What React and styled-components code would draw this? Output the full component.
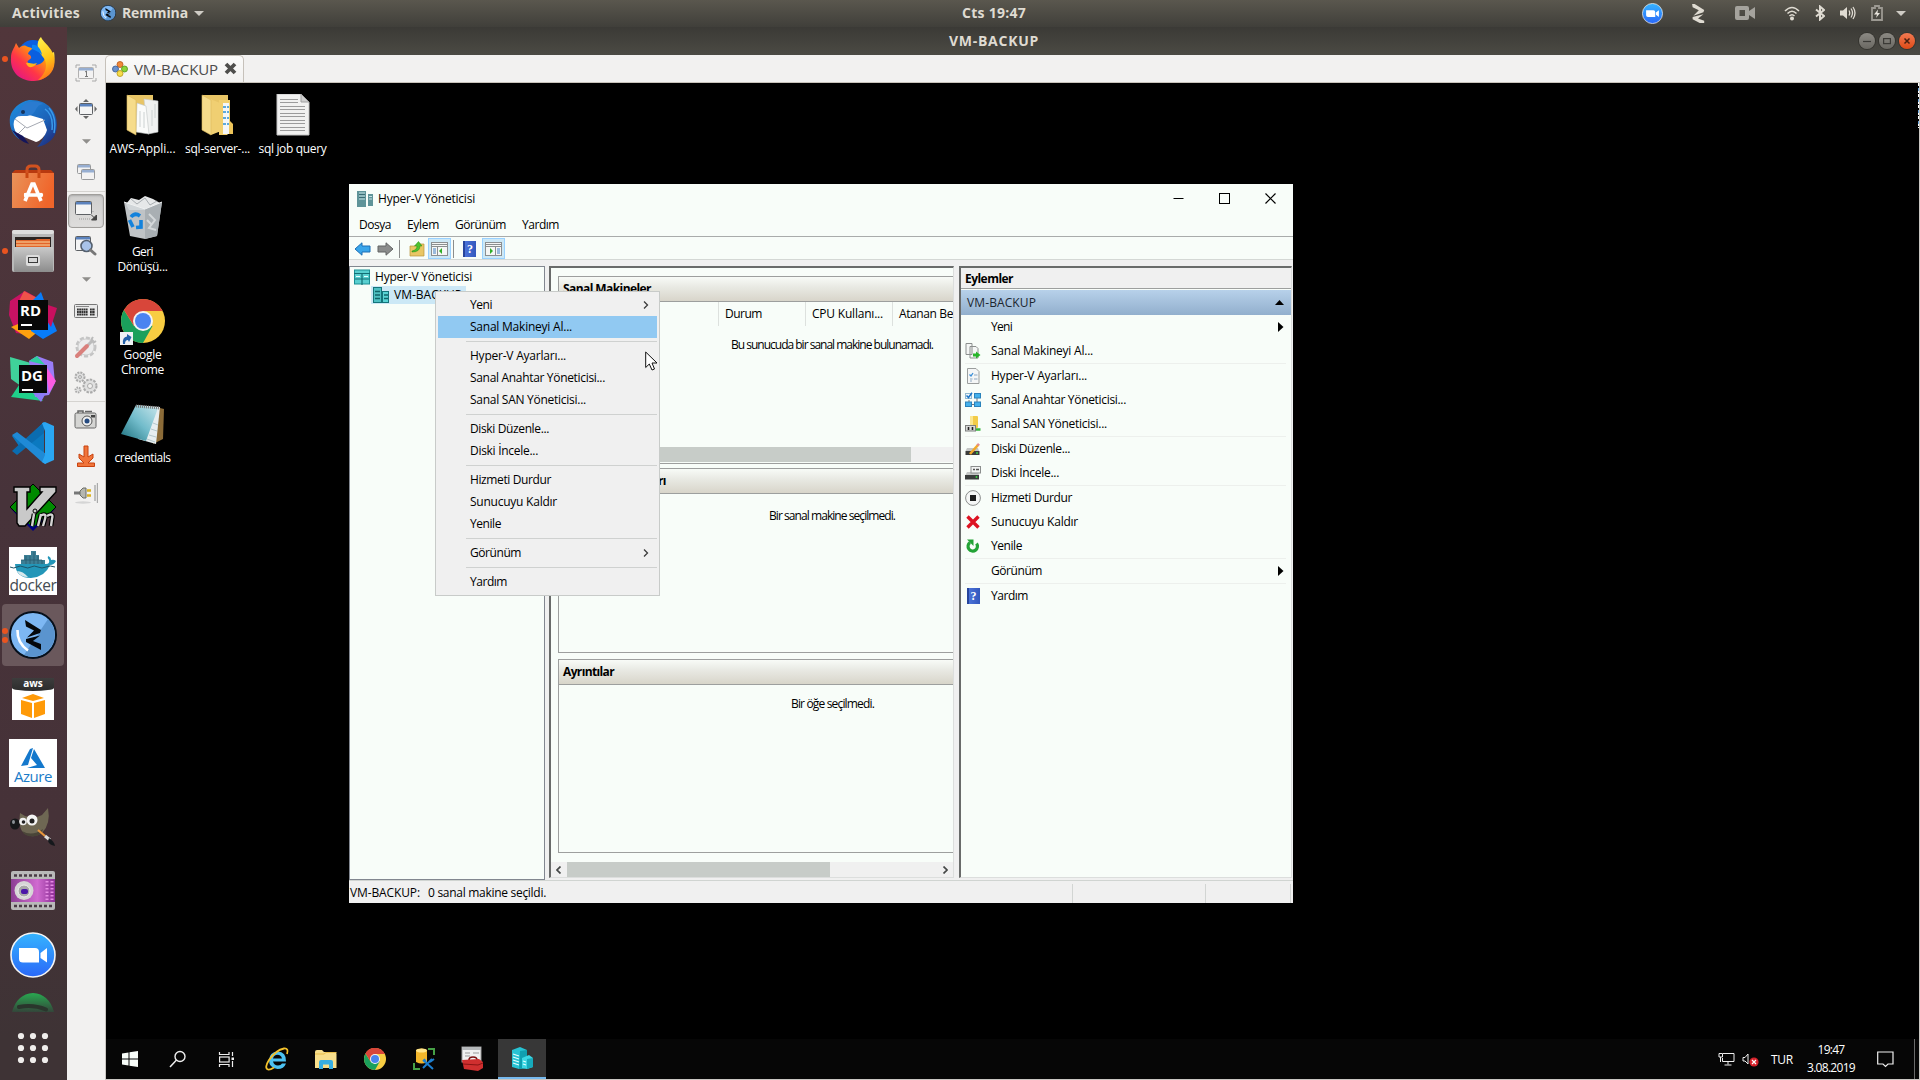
import React, { useLayoutEffect, useRef, useState } from "react";
import styled, { createGlobalStyle, css } from "styled-components";

const Global = createGlobalStyle`
  * { box-sizing: border-box; }
  html, body { margin: 0; padding: 0; background: #000; overflow: hidden; }
  body { font-family: "Open Sans", "Noto Sans", "Liberation Sans", sans-serif; }
  svg { display: block; flex: none; }
`;

/* ---------- text ---------- */

const Label = styled.span`
  display: inline-block;
  white-space: pre;
  flex: none;
  justify-self: start;
  font-weight: ${(p) => (p.$bold ? 700 : 400)};
`;

function T({ w, bold, children }) {
  const ref = useRef(null);
  const [spacing, setSpacing] = useState(0);
  useLayoutEffect(() => {
    const natural = ref.current.getBoundingClientRect().width;
    if (w) setSpacing((w - natural) / String(children).length);
  }, [w, children]);
  return (
    <Label ref={ref} $bold={bold} style={{ letterSpacing: spacing }}>
      {children}
    </Label>
  );
}

/* ---------- gnome shell ---------- */

const Screen = styled.div`
  width: 1920px;
  height: 1080px;
  display: flex;
  flex-direction: column;
  overflow: hidden;
  background: #000;
`;

const TopBar = styled.header`
  height: 27px;
  flex: none;
  display: grid;
  grid-template-columns: 962px 64px 1fr;
  align-items: center;
  padding-bottom: 1px;
  background: linear-gradient(#5a574e, #403f3a);
  color: #dfdbd2;
  font-size: 14px;
  line-height: 18px;
  font-weight: 700;
`;

const TopLeft = styled.div`
  display: flex;
  align-items: center;
  padding-left: 12px;
`;

const AppName = styled.div`
  display: flex;
  align-items: center;
  margin-left: 20px;
  gap: 6px;
`;

const TopRight = styled.div`
  display: flex;
  align-items: center;
  justify-content: flex-end;
  padding-right: 2px;
`;

const Tray = styled.div`
  width: ${(p) => p.$w}px;
  display: flex;
  justify-content: center;
`;

const Body = styled.div`
  flex: 1;
  display: flex;
  min-height: 0;
`;

const Dock = styled.nav`
  width: 67px;
  flex: none;
  display: flex;
  flex-direction: column;
  background: linear-gradient(#51363b, #47333a 45%, #463238 75%, #3e3335 96%);
`;

const DockCell = styled.div`
  height: ${(p) => p.$h || 64}px;
  flex: none;
  display: flex;
  align-items: center;
  overflow: hidden;
`;

const Dots = styled.div`
  width: 9px;
  display: flex;
  flex-direction: column;
  align-items: center;
  gap: 3px;
  flex: none;
  margin-right: -7px;
  z-index: 1;
`;

const Dot = styled.i`
  width: 6px;
  height: 6px;
  border-radius: 50%;
  background: #e95420;
`;

const Tile = styled.div`
  width: 62px;
  height: 62px;
  flex: none;
  display: flex;
  align-items: center;
  justify-content: center;
  border-radius: 4px;
  background: ${(p) => (p.$active ? "#6a585c" : "transparent")};
`;

const LogoCard = styled.div`
  width: 48px;
  height: 48px;
  background: #fff;
  display: flex;
  flex-direction: column;
  align-items: center;
  justify-content: flex-end;
  overflow: hidden;
  line-height: 14px;
  font-size: ${(p) => p.$size}px;
  color: ${(p) => p.$c};
  padding-bottom: ${(p) => p.$pb}px;
`;

const AwsCard = styled.div`
  width: 42px;
  height: 42px;
  background: #fff;
  display: flex;
  flex-direction: column;
  align-items: center;
  gap: 3px;
`;

const AwsTop = styled.div`
  width: 42px;
  height: 13px;
  background: linear-gradient(#3d3d3d, #2c2c2c);
  border-radius: 0 0 50% 50% / 0 0 3px 3px;
  color: #fff;
  font: 700 10px/11px "Open Sans", sans-serif;
  text-align: center;
`;

const IdeBox = styled.div`
  width: 48px;
  height: 48px;
  display: grid;
  > * { grid-area: 1 / 1; }
`;

const IdeText = styled.div`
  margin: ${(p) => p.$m};
  width: ${(p) => p.$w}px;
  height: ${(p) => p.$w}px;
  background: #080808;
  color: #fff;
  font: 700 15px/18px "Open Sans", sans-serif;
  padding: 1px 0 0 2px;
  z-index: 1;
  &::after {
    content: "";
    display: block;
    width: 11px;
    height: 2px;
    margin: 5px 0 0 1px;
    background: #fff;
  }
`;

/* ---------- remmina ---------- */

const Remmina = styled.main`
  flex: 1;
  display: flex;
  flex-direction: column;
  min-width: 0;
`;

const TitleBar = styled.div`
  height: 28px;
  flex: none;
  display: grid;
  grid-template-columns: 882px 1fr auto;
  align-items: center;
  background: linear-gradient(#3b3a36, #4b4a44);
  color: #dfdbd2;
  font-size: 14px;
  line-height: 18px;
  font-weight: 700;
  padding: 0 5px 1px 0;
`;

const Buttons = styled.div`
  display: flex;
  gap: 4px;
`;

const RoundButton = styled.div`
  width: 16px;
  height: 16px;
  border-radius: 50%;
  display: flex;
  align-items: center;
  justify-content: center;
  background: ${(p) => (p.$close ? "linear-gradient(#f37a52, #df4a16)" : "linear-gradient(#8c8a84, #6a6862)")};
  box-shadow: 0 0 0 1px #35342f;
`;

const RemBody = styled.div`
  flex: 1;
  display: flex;
  min-height: 0;
  background: #f2f1f0;
`;

const ToolColumn = styled.div`
  width: 38px;
  flex: none;
  display: flex;
  flex-direction: column;
`;

const ToolSlot = styled.div`
  height: ${(p) => p.$h}px;
  flex: none;
  display: flex;
  align-items: center;
  justify-content: center;
  ${(p) => p.$line && css`border-top: 1px solid #d5d3d0;`}
  ${(p) => p.$active && css`
    margin: 2px 1px 0;
    border: 1px solid #a09e9b;
    border-radius: 4px;
    background: linear-gradient(#cfcecd, #dedddc);
    box-shadow: inset 0 1px 2px #aaa;
  `}
`;

const Pane = styled.div`
  flex: 1;
  display: flex;
  flex-direction: column;
  min-width: 0;
`;

const TabStrip = styled.div`
  height: 28px;
  flex: none;
  display: flex;
  align-items: flex-end;
  border-bottom: 1px solid #c8c3bb;
`;

const Tab = styled.div`
  width: 139px;
  height: 27px;
  display: flex;
  align-items: center;
  padding: 0 0 1px 6px;
  gap: 6px;
  border: 1px solid #c6c1ba;
  border-bottom: 0;
  border-radius: 5px 5px 0 0;
  background: linear-gradient(#fbfbfa, #f2f1f0);
  color: #4c4c4c;
  font-size: 15px;
`;

const Viewport = styled.div`
  flex: 1;
  border: solid #c9c6c2;
  border-width: 0 1px 1px;
  display: flex;
  flex-direction: column;
  position: relative;
  background: #000;
  color: #fff;
`;

const Glitch = styled.div`
  position: absolute;
  right: 0;
  top: 0;
  width: 1px;
  height: 45px;
  background: repeating-linear-gradient(#fff 0 3px, #000 3px 5px, #6fa8dc 5px 8px, #fff 8px 10px, #000 10px 11px);
`;

const DesktopIcons = styled.div`
  flex: 1;
  display: grid;
  grid-template-columns: repeat(3, 75px);
  grid-auto-rows: 103px;
  align-content: start;
  margin-left: -1px;
  font-size: 12px;
`;

const DeskIcon = styled.div`
  display: flex;
  flex-direction: column;
  align-items: center;
  line-height: 15px;
`;

const DeskArt = styled.div`
  height: 58px;
  padding-top: 6px;
  display: flex;
  align-items: center;
`;

/* ---------- windows taskbar ---------- */

const Taskbar = styled.div`
  height: 40px;
  flex: none;
  display: flex;
  background: #060606;
  font-size: 12px;
`;

const TaskGroup = styled.div`
  display: flex;
  gap: ${(p) => p.$gap || 0}px;
  margin-right: 3px;
`;

const TaskButton = styled.div`
  width: 48px;
  height: 40px;
  display: flex;
  align-items: center;
  justify-content: center;
  ${(p) => p.$active && css`
    background: #373737;
    border-bottom: 2px solid #76b9ed;
  `}
`;

const SysTray = styled.div`
  margin-left: auto;
  display: flex;
  align-items: center;
`;

const Clock = styled.div`
  width: 58px;
  margin: 0 17px 0 0;
  display: flex;
  flex-direction: column;
  align-items: center;
  line-height: 18px;
`;

const PeekLine = styled.div`
  width: 1px;
  height: 40px;
  margin: 0 4px 0 20px;
  background: #6a6a6a;
`;

/* ---------- hyper-v window ---------- */

const Win = styled.section`
  position: absolute;
  left: 243px;
  top: 101px;
  width: 944px;
  height: 719px;
  display: flex;
  flex-direction: column;
  background: #f8fdf9;
  color: #000;
  font-size: 12px;
  line-height: 16px;
`;

const WinTitle = styled.div`
  height: 28px;
  flex: none;
  display: flex;
  align-items: center;
  padding: 1px 0 0 8px;
  gap: 4px;
`;

const WinButtons = styled.div`
  margin-left: auto;
  display: flex;
  gap: 35px;
  padding: 0 17px 1px 0;
`;

const MenuBar = styled.div`
  height: 25px;
  flex: none;
  display: flex;
  align-items: center;
  gap: 16px;
  padding: 2px 0 0 10px;
  border-bottom: 1px solid #a9acab;
`;

const ToolBar = styled.div`
  height: 23px;
  flex: none;
  display: flex;
  align-items: center;
  padding: 1px 0 0 5px;
  border-bottom: 1px solid #d4d8d5;
`;

const Nav = styled.div`
  display: flex;
  gap: 6px;
`;

const ToolSep = styled.i`
  width: 1px;
  height: 18px;
  background: #8b8d8c;
  margin: 0 ${(p) => p.$r}px 0 ${(p) => p.$l}px;
`;

const Pressed = styled.div`
  width: 23px;
  height: 21px;
  border: 1px solid #99d1ff;
  background: #cce8f6;
  display: flex;
  align-items: center;
  justify-content: center;
  margin-left: ${(p) => p.$l}px;
`;

const Panels = styled.div`
  flex: 1;
  display: flex;
  padding-top: 6px;
  background: #f0f0f0;
  min-height: 0;
`;

const Tree = styled.div`
  width: 196px;
  flex: none;
  margin-right: 4px;
  border: 1px solid #828790;
  background: #f8fdf9;
  padding-top: 1px;
`;

const TreeRow = styled.div`
  height: 18px;
  display: flex;
  align-items: center;
  gap: ${(p) => p.$gap}px;
  margin-left: ${(p) => p.$l}px;
  ${(p) => p.$sel && css`
    width: 95px;
    padding-left: 2px;
    background: #cce8f6;
  `}
`;

const Sunken = styled.div`
  flex: none;
  width: ${(p) => p.$w}px;
  margin-right: ${(p) => p.$mr || 0}px;
  margin-bottom: 2px;
  border: solid;
  border-width: 2px 1px 1px 2px;
  border-color: #696b6a #dcdedd #dcdedd #696b6a;
  background: #f8fdf9;
  display: flex;
  flex-direction: column;
  overflow: hidden;
`;

const Group = styled.div`
  margin: ${(p) => p.$mt}px 0 0 7px;
  height: ${(p) => p.$h}px;
  flex: none;
  border: 1px solid #9d9f9e;
  border-right: 0;
  display: flex;
  flex-direction: column;
`;

const GroupHead = styled.div`
  height: 25px;
  flex: none;
  display: flex;
  align-items: center;
  padding-left: 4px;
  border-bottom: 1px solid #9d9f9e;
  background: linear-gradient(#f8fbf7, #e9eae4 40%, #d8d5ca);
`;

const Columns = styled.div`
  height: 24px;
  flex: none;
  display: flex;
  align-items: center;
  padding-left: 72px;
`;

const Column = styled.div`
  width: 87px;
  height: 24px;
  flex: none;
  display: flex;
  align-items: center;
  border-left: 1px solid #dde1de;
  padding-left: 6px;
  &:first-child { margin-left: 87px; }
  &:last-child { width: 62px; }
`;

const Message = styled.div`
  padding: ${(p) => p.$t}px 0 0 ${(p) => p.$l}px;
`;

const Scroll = styled.div`
  height: 15px;
  flex: none;
  margin-top: auto;
  margin-bottom: ${(p) => p.$mb || 0}px;
  background: #f0f0f0;
  display: flex;
  align-items: center;
  justify-content: space-between;
  padding: 0 5px 0 ${(p) => p.$pl}px;
`;

const Thumb = styled.div`
  width: ${(p) => p.$w}px;
  height: 15px;
  margin-right: auto;
  margin-left: ${(p) => p.$l || 0}px;
  background: #c7ccc8;
`;

const ActHead = styled.div`
  height: 20px;
  flex: none;
  background: #f0f0f0;
  display: flex;
  align-items: center;
  padding: 2px 0 0 4px;
`;

const ActGroup = styled.div`
  height: 27px;
  flex: none;
  border-top: 1px solid #9d9f9e;
  display: flex;
  align-items: center;
  justify-content: space-between;
  padding: 1px 7px 0 6px;
  background: linear-gradient(#f8fdf9 0 1px, #b7d1ea 1px, #92afcd);
  color: #1c2630;
`;

const ActRow = styled.div`
  height: ${(p) => (p.$line ? 25 : 24)}px;
  flex: none;
  display: flex;
  align-items: center;
  margin: 0 5px 0 4px;
  padding-right: 2px;
  ${(p) => p.$line && css`border-top: 1px solid #edf0ed;`}
`;

const ActIcon = styled.div`
  width: 16px;
  margin-right: 10px;
  display: flex;
  justify-content: center;
  & + span { margin-right: auto; }
`;

const Status = styled.div`
  height: 23px;
  flex: none;
  border-top: 1px solid #d0d4d1;
  background: #f0f0f0;
  display: flex;
  align-items: center;
  padding: 2px 2px 0 1px;
`;

const StatusText = styled.div`
  display: flex;
  gap: 8px;
  margin-right: auto;
`;

const StatusCell = styled.div`
  width: ${(p) => p.$w}px;
  height: 19px;
  border-left: 1px solid #d2d5d3;
  &:last-child { border-right: 1px solid #d2d5d3; }
`;

const ContextMenu = styled.div`
  position: absolute;
  left: 329px;
  top: 208px;
  width: 225px;
  height: 305px;
  padding: 2px;
  border: 1px solid #c8cbc9;
  background: #f0f0f0;
  color: #000;
  font-size: 12px;
  line-height: 16px;
`;

const MenuItem = styled.div`
  height: 22px;
  display: flex;
  align-items: center;
  justify-content: space-between;
  padding: 0 8px 1px 32px;
  background: ${(p) => (p.$hot ? "#91c9f2" : "transparent")};
`;

const MenuLine = styled.hr`
  height: 1px;
  border: 0;
  margin: 3px 0 3px 28px;
  background: #cfd1d0;
`;

const Pointer = styled.div`
  position: absolute;
  left: 539px;
  top: 268px;
`;

/* ---------- drawings ---------- */

const Svg = ({ w = 16, h = w, vb, children, ...r }) => (
  <svg width={w} height={h} viewBox={vb || `0 0 ${w} ${h}`} fill="none" {...r}>{children}</svg>
);

const Firefox = () => (
  <Svg w={46} h={46}>
    <defs>
      <linearGradient id="ff" x1="0.1" y1="0.9" x2="0.9" y2="0.1">
        <stop offset="0" stopColor="#e31587" /><stop offset=".35" stopColor="#ff3647" /><stop offset=".7" stopColor="#ff980e" /><stop offset="1" stopColor="#fff44f" />
      </linearGradient>
      <linearGradient id="ffy" x1="0" y1="0" x2="0.2" y2="1">
        <stop offset="0" stopColor="#fff44f" /><stop offset=".6" stopColor="#ffc417" /><stop offset="1" stopColor="#ff7a1a" />
      </linearGradient>
    </defs>
    <circle cx="23" cy="19" r="15" fill="#0a5fe0" />
    <path d="M6 7 C7 9 8 10 9 12 C11 10 14 9 16 10 C19 12 22 11 22 13 C20 15 18 16 18 18 C22 20 22 22 19 24 C15 26 20 30 26 29 C32 28 35 25 35 20 L44 16 C47 32 38 45 24 45 C10 45 0 36 1 22 C1 15 4 13 6 7Z" fill="url(#ff)" />
    <path d="M31 1 C33 7 45 12 44.500 27 C44 37 36 43 28 44 C34 39 38 32 35 24 C32 19 26 14 28 6 C29 3 30 2 31 1Z" fill="url(#ffy)" />
    <path d="M22 9 C27 8 31 13 32 19 C30 16 26 15 22 13Z" fill="#0b83f4" />
    <path d="M16 27 C20 26 22 29 27 27 C24 32 18 33 16 27Z" fill="#ffb319" />
  </Svg>
);

const Thunderbird = () => (
  <Svg w={48} h={48}>
    <defs><linearGradient id="tb" x1="0" y1="0" x2="1" y2="1"><stop offset="0" stopColor="#1f8fe0" /><stop offset=".6" stopColor="#1c62b8" /><stop offset="1" stopColor="#20206e" /></linearGradient></defs>
    <path d="M20 1 C38 0 48 12 48 26 C48 38 40 46 28 48 C32 44 36 38 36 32 L10 40 C2 34 0 26 1 18 C3 10 10 3 20 1Z" fill="url(#tb)" />
    <path d="M5 22 C7 17 12 15 17 15 L34 20 L38 31 C36 38 31 42 27 43 L8 35 C5 31 4 26 5 22Z" fill="#fff" />
    <path d="M6 20 L18 29 L36 21 M16 28 L9 35" stroke="#a5a9b2" strokeWidth="1" />
    <path d="M13 8 C11 13 9 16 5 18 C12 16 17 18 22 16 C28 13 26 6 34 5 C26 1 17 2 13 8Z" fill="#2a7bd0" />
    <path d="M36 10 C42 14 44 22 43 31 M40 9 C46 16 47 24 45 34" stroke="#3a9bea" strokeWidth="1.5" />
    <path d="M3 31 C8 38 12 43 20 45 L14 37Z" fill="#14155a" /><circle cx="14" cy="13" r="2" fill="#16355e" />
  </Svg>
);

const Software = () => (
  <Svg w={44} h={46}>
    <defs><linearGradient id="sw" x1="0" y1="0" x2="1" y2="0.3"><stop offset="0" stopColor="#e9935a" /><stop offset="1" stopColor="#f0652a" /></linearGradient></defs>
    <path d="M1 9 l3 -3 H40 l3 3Z" fill="#b8390f" />
    <path d="M16 14 V6 Q16 2 20 2 H24 Q28 2 28 6 V14" stroke="#d2521f" strokeWidth="3" />
    <rect x="1" y="9" width="42" height="35" fill="url(#sw)" />
    <path d="M16 14 V9 M28 14 V9" stroke="#c94812" strokeWidth="3" />
    <path d="M14 37 L21 20 H23 L30 37 M13 31 H31" stroke="#fff" strokeWidth="3.6" />
    <circle cx="15" cy="31" r="2.2" fill="#fff" /><circle cx="30" cy="31" r="2.2" fill="#fff" />
  </Svg>
);

const Files = () => (
  <Svg w={44} h={46}>
    <defs><linearGradient id="fl" x1="0" y1="0" x2="0" y2="1"><stop offset="0" stopColor="#c9c9c9" /><stop offset="1" stopColor="#8c8c8c" /></linearGradient></defs>
    <rect x="1" y="2" width="42" height="42" rx="2" fill="#b9b9b9" /><rect x="1" y="2" width="42" height="4" rx="2" fill="#dedede" />
    <rect x="4" y="9" width="36" height="12" fill="#2b2422" />
    <path d="M5 12 H24 L26 11 H39 V20 H5Z" fill="#e2642a" /><path d="M5 14 H39 M5 17 H39" stroke="#fbd9a2" strokeWidth="1" />
    <rect x="3" y="19" width="39" height="25" rx="1" fill="url(#fl)" />
    <rect x="15" y="27" width="14" height="11" rx="2" fill="#ddd" /><rect x="17.500" y="29.500" width="9" height="5" fill="#d6d6d6" stroke="#3a3a3a" />
  </Svg>
);

const Rider = () => (
  <Svg w={48} h={48}>
    <path d="M1 10 L16 0 L27 6 L22 44 L7 42 L0 24Z" fill="#c81263" /><path d="M2 36 L20 48 L32 38 L16 30Z" fill="#fda00f" />
    <path d="M15 0 L30 8 L26 14 L10 10Z" fill="#f0524a" /><path d="M23 10 L32 1 L36 12 L48 40 L34 48 L22 40Z" fill="#087cfa" />
    <path d="M33 12 L48 17 L42 36 L38 30Z" fill="#c9105f" />
  </Svg>
);
const DataGrip = () => (
  <Svg w={48} h={48}>
    <path d="M1 2 L22 8 L16 34 L2 24Z" fill="#3fd29a" /><path d="M2 42 L14 24 L34 46Z" fill="#1fd08a" /><path d="M20 6 L28 1 L44 7 L46 28 L40 40 L26 42Z" fill="#9a7cf7" />
    <path d="M36 10 L47 26 L40 38Z" fill="#fb5be0" /><path d="M24 38 L38 36 L32 47Z" fill="#8c7bf5" /><path d="M20 6 L28 1 L36 10Z" fill="#2fcfa0" />
  </Svg>
);
const VsCode = () => (
  <Svg w={44} h={44}>
    <path d="M33 1 L8 25 L1 15 L6 12 L33 34Z" fill="#0b79c0" /><path d="M1 30 L6 34 L33 12 V1Z" fill="#0a6cb0" />
    <path d="M1 14 L6 11 L35 33 V43 L31 41Z" fill="#1f8ad6" /><path d="M31 2 L34 1 L43 5 V39 L34 43 L31 41 L34 34 V10Z" fill="#2aa6f2" />
  </Svg>
);
const Vim = () => (
  <Svg w={48} h={48}>
    <path d="M24 1 L47 24 L24 47 L1 24Z" fill="#008a00" stroke="#000" /><path d="M1 25 L24 48 L47 25 L24 44Z" fill="#000080" />
    <path d="M5 4 H21 V9 H18 V26 L33 9 H31 V4 H47 V9 L16 43 H10 L8 40 V9 H5Z" fill="#c9c9c9" stroke="#000" strokeWidth="1.4" />
    <g stroke="#000" strokeWidth="4.600"><path d="M25 31 L23 43 M32 31 L29 43 M31 33 Q38 29 36 36 L34 43 M38 33 Q45 29 43 36 L42 43" /></g>
    <g stroke="#d4d4d4" strokeWidth="2.400"><path d="M25 31 L23 43 M32 31 L29 43 M31 33 Q38 29 36 36 L34 43 M38 33 Q45 29 43 36 L42 43" /></g>
    <circle cx="26" cy="28" r="2" fill="#ccc" stroke="#000" />
  </Svg>
);
const Whale = () => (
  <Svg w={48} h={31}>
    <path d="M12 13 H36 V17 H12Z M15 8 H30 V13 H15Z M22 4 H27 V9 H22Z" fill="#3c7f95" />
    <path d="M17 9 V17 M21 9 V17 M25 5 V17 M29 9 V17 M33 13 V17 M12 13 H33" stroke="#265c6e" strokeWidth=".8" />
    <path d="M6 17 H37 Q41 17 40 13 Q38 11 39 9 Q42 10 42 13 Q45 12 47 14 Q45 18 41 18 Q36 30 22 31 Q7 31 6 17Z" fill="#2396b8" />
    <path d="M1 20 Q5 22 8 20 T15 20 T22 20 T29 20 T37 20 T46 20" stroke="#1d5468" /><path d="M8 24 Q14 24 19 30 Q11 30 8 24Z" fill="#d8e8ec" />
  </Svg>
);
const RemminaMark = ({ w = 48, flat }) => (
  <Svg w={w} vb="0 0 48 48">
    {!flat && <><circle cx="24" cy="24" r="23" fill="#7db7f3" stroke="#06101c" strokeWidth="2" /><path d="M39 8 A22 22 0 0 1 15 44 Z" fill="#5a94cf" /><path d="M8.500 19 Q8 32 19 39.500" stroke="#fff" strokeWidth="2.600" /></>}
    <path d="M16 9 L32 19 L31 22 L18 26.500 L25 19.500 L17 15.500Z M31 24.500 L24 30 L32 33 V39 L17 31 V28Z" fill={flat ? "#dfdbd2" : "#05080c"} transform={flat ? "translate(-24 -22) scale(1.95)" : undefined} />
  </Svg>
);
const AwsCube = () => (
  <Svg w={26} h={24}><path d="M2 4 L13 0 L24 4 L13 7Z M1 6 L12 9 V24 L1 20Z M25 6 L14 9 V24 L25 20Z" fill="#ff9a08" /></Svg>
);
const AzureMark = () => <Svg w={26} h={22}><path d="M10 2 L13 1 L8 18 L1 19Z M14 2 L25 21 H7 L17 18 L11 11Z" fill="#1478cc" /></Svg>;
const Gimp = () => (
  <Svg w={46} h={40}>
    <path d="M10 6 L15 9 Q25 12 32 8 L38 1 Q41 17 32 26 Q24 32 15 27 Q8 23 10 6Z" fill="#6e6753" /><path d="M12 24 Q22 30 33 22 L31 27 Q22 32 14 27Z" fill="#4a4538" />
    <ellipse cx="5" cy="17" rx="5" ry="5.500" fill="#16181a" /><ellipse cx="3.500" cy="15" rx="1.500" ry="2" fill="#8a9196" />
    <circle cx="13" cy="14.500" r="3.800" fill="#eee" /><circle cx="13.500" cy="15" r="1.800" fill="#222" /><circle cx="22" cy="13" r="5.500" fill="#f4f4f4" /><circle cx="22" cy="14" r="2.500" fill="#222" />
    <path d="M28 23 L35 29" stroke="#e8963c" strokeWidth="2.200" /><path d="M35 29 L40 33" stroke="#ddd" strokeWidth="3" /><path d="M39 31 Q44 34 45 39 Q39 38 38 34Z" fill="#15181c" />
  </Svg>
);
const Kazam = () => (
  <Svg w={44} h={40}>
    <defs><linearGradient id="kz"><stop offset="0" stopColor="#8c3f94" /><stop offset=".6" stopColor="#d06bd0" /><stop offset="1" stopColor="#8d2f96" /></linearGradient></defs>
    <rect width="44" height="39" rx="2" fill="#b9b9b9" /><rect y="8" width="44" height="23" fill="url(#kz)" />
    <path d="M3 4.500 H42 M3 35 H42" stroke="#4a3b45" strokeWidth="2.500" strokeDasharray="3 2" />
    <path d="M36 10 V30 M41 10 V30" stroke="#e68ae4" strokeWidth="3" strokeDasharray="1.500 2" />
    <circle cx="13" cy="19.500" r="9.500" fill="#d6d6d6" /><circle cx="13" cy="20" r="6" fill="#a8a8a8" stroke="#eee" /><rect x="10" y="18" width="7" height="5" rx="2" fill="#4b16a8" />
  </Svg>
);
const Zoom = ({ w = 46 }) => (
  <Svg w={w} vb="0 0 46 46">
    <defs><linearGradient id="zm" x1="0" y1="0" x2="0" y2="1"><stop offset="0" stopColor="#35b4ff" /><stop offset="1" stopColor="#2a68f8" /></linearGradient></defs>
    <circle cx="23" cy="23" r="22" fill="url(#zm)" stroke="#f4f4f4" strokeWidth="1.600" />
    <path d="M9 16 H25 Q29 16 29 20 V30.500 H13 Q9 30.500 9 27Z M30.500 21 L37 16 V30.500 L30.500 26Z" fill="#fff" />
  </Svg>
);
const Spotify = () => (
  <Svg w={44} h={20}>
    <defs><linearGradient id="sp" x1="0" y1="0" x2="0" y2="1"><stop offset="0" stopColor="#29a850" /><stop offset="1" stopColor="#33463a" /></linearGradient></defs>
    <path d="M1 20 Q6 2 22 1 Q38 2 43 20Z" fill="url(#sp)" /><path d="M8 15 Q22 12 35 17.500" stroke="#2a352c" strokeWidth="4" strokeLinecap="round" />
  </Svg>
);
const AppGrid = () => <Svg w={32} h={32}>{[4, 16, 28].map((y) => [4, 16, 28].map((x) => <circle key={x + "-" + y} cx={x} cy={y} r="3.100" fill="#f0eeec" />))}</Svg>;

const Caret = ({ w = 10, h = 5, c = "#cfccc5" }) => <Svg w={w} h={h} vb="0 0 10 5"><path d="M0 0 H10 L5 5Z" fill={c} /></Svg>;

const Cam = () => <Svg w={20} h={14}><path fillRule="evenodd" d="M2 0 H12 Q14 0 14 2 V5 L20 1 V13 L14 9 V12 Q14 14 12 14 H2 Q0 14 0 12 V2 Q0 0 2 0Z M4.500 4 V10 H10 V4Z" fill="#a5a39d" /></Svg>;
const Wifi = () => <Svg w={16} h={15} stroke="#dfdbd2" strokeWidth="1.600"><path d="M1 5 Q8 -2 15 5 M3.500 7.500 Q8 3 12.500 7.500 M5.500 10 Q8 7.500 10.500 10" /><circle cx="8" cy="12.500" r="1.200" fill="#dfdbd2" /></Svg>;
const Bt = () => <Svg w={10} h={16}><path d="M1 4.500 L9 11 L5 14.500 V1.500 L9 5 L1 11.500" stroke="#dfdbd2" strokeWidth="2" /></Svg>;
const Vol = () => <Svg w={16} h={14}><path d="M0 4.500 H3 L7 1 V13 L3 9.500 H0Z" fill="#dfdbd2" /><path d="M9 4.500 Q10.500 7 9 9.500 M11 2.500 Q14 7 11 11.500 M13 1 Q17 7 13 13" stroke="#dfdbd2" strokeWidth="1.300" /></Svg>;
const Batt = () => <Svg w={12} h={16}><path d="M1 3 H4 V1 H8 V3 H11 V15 H1Z" stroke="#9c9992" strokeWidth="1.800" /><path d="M7 4.500 L3 9.500 H6 L5 13 L9 8 H6.500Z" fill="#e8e4dc" /></Svg>;

/* remmina side toolbar */
const Frame = ({ x, y, w, h, c = "#5d6064" }) => <g><rect x={x + .5} y={y + .5} width={w} height={h} rx="1" fill="#f4f4f4" stroke={c} /><rect x={x + 1} y={y + 1} width={w - 1} height="2.500" fill="#5b82bd" /></g>;
const TFull = () => <Svg w={22} h={18}><path d="M1 4 V1 H5 M17 1 H21 V4 M21 14 V17 H17 M5 17 H1 V14" stroke="#a8a8a8" /><g opacity=".6"><Frame x={3} y={3} w={15} h={11} c="#888" /></g><path d="M10 8 L11.500 7 V12 M10 12.500 H13" stroke="#777" /></Svg>;
const TFit = () => <Svg w={22} h={20}><Frame x={4} y={4} w={13} h={11} /><path d="M8 3 L11 0 L14 3Z M8 17 L11 20 L14 17Z M2.500 7 L0 10 L2.500 13Z M19.500 7 L22 10 L19.500 13Z" fill="#666" /></Svg>;
const TWin = () => <Svg w={20} h={18} opacity=".6"><Frame x={1} y={0} w={13} h={9} /><Frame x={5} y={5} w={13} h={10} /></Svg>;
const TScale = () => <Svg w={24} h={20}><Frame x={1} y={0} w={16} h={13} /><path d="M19 10 V12 M5 18 H16" stroke="#999" strokeDasharray="1 1" /><path d="M17.500 14 L22 18.500 M22.500 14 V19 H17.500Z" stroke="#444" fill="#444" /></Svg>;
const TFind = () => <Svg w={24} h={20}><Frame x={1} y={0} w={15} h={14} /><circle cx="12.500" cy="10" r="5.500" fill="#a9c3e8" stroke="#55606e" strokeWidth="1.600" /><path d="M16.500 14 L21 18" stroke="#777" strokeWidth="3" strokeLinecap="round" /></Svg>;
const TKeys = () => <Svg w={24} h={15}><rect x=".5" y=".5" width="23" height="13" rx="1" fill="#e9e9e9" stroke="#777" /><path d="M3 5.500 H14 M3 8 H14 M3 10.500 H14 M16 5.500 H21 M16 8 H21 M16 10.500 H21" stroke="#333" strokeWidth="1.900" strokeDasharray="1.800 .4" /><path d="M2 2.500 H15" stroke="#888" /></Svg>;
const TTool = () => <Svg w={24} h={24}><circle cx="12" cy="12" r="9" stroke="#c4c4c4" strokeWidth="3" strokeDasharray="4 2" fill="#e8e8e8" /><circle cx="12" cy="12" r="8" stroke="#cfcfcf" fill="#ececec" /><path d="M14 10 L19 5" stroke="#bbb" strokeWidth="3" /><path d="M17 5 L19 2 M19 8 L22 6" stroke="#bbb" strokeWidth="2" /><path d="M3 21 L13 11" stroke="#d9807c" strokeWidth="4" strokeLinecap="round" /></Svg>;
const TGears = () => <Svg w={24} h={24} stroke="#aaa"><g fill="#e0e0e0"><circle cx="6" cy="6" r="4.500" strokeWidth="2" strokeDasharray="2 1" /><circle cx="16" cy="15" r="6.500" strokeWidth="2" strokeDasharray="2.500 1.200" /><circle cx="4" cy="19" r="2.500" strokeWidth="2" strokeDasharray="1.500 1" /></g><circle cx="6" cy="6" r="1.500" /><circle cx="16" cy="15" r="2.500" fill="#f2f1f0" /></Svg>;
const TCam = () => <Svg w={24} h={20}><rect x="1" y="3" width="21" height="15" rx="1.500" fill="#d5d5d3" stroke="#666" /><path d="M4 3 V1 H9 V3 M11 1.500 H18" stroke="#666" strokeWidth="1.500" /><circle cx="13" cy="11" r="5" fill="#efefef" stroke="#555" /><circle cx="13" cy="11" r="2.500" fill="#254a80" /><rect x="17" y="5" width="4" height="2.500" fill="#444" /></Svg>;
const TDown = () => <Svg w={20} h={23}><path d="M8 1 H12 V12 L17 9 V13 L12 18 H18.500 V21.500 H1.500 V18 H8 L3 13 V9 L8 12Z" fill="#f0743a" stroke="#c8430f" strokeLinejoin="round" /></Svg>;
const TPlug = () => <Svg w={24} h={22}><path d="M0 11 H6" stroke="#777" strokeWidth="3" /><path d="M6 9 L9 6 H12 V16 H9 L6 13Z" fill="#b5b6b0" stroke="#6b6c66" /><path d="M13 8.500 H17 M13 13.500 H17" stroke="#d9b322" strokeWidth="2.500" /><path d="M21 3 V19 M23.500 1 V21" stroke="#aaa" strokeWidth="1.400" /><ellipse cx="9" cy="20.500" rx="8" ry="1.200" fill="#d5d5d5" /></Svg>;

const TabMark = () => <Svg w={16} h={16} strokeWidth=".8"><circle cx="8" cy="3.500" r="3" fill="#f08a3a" stroke="#b5571a" /><circle cx="3.500" cy="8" r="3" fill="#6b93cf" stroke="#34578f" /><circle cx="12.500" cy="8" r="3" fill="#8ad43c" stroke="#4f9412" /><circle cx="8" cy="12.500" r="3" fill="#f7dc4a" stroke="#b39617" /></Svg>;
const TabClose = () => <Svg w={13} h={13}><path d="M2 2 L11 11 M11 2 L2 11" stroke="#4f4f4d" strokeWidth="3.800" /></Svg>;

/* desktop icons */
const FolderDocs = ({ blue }) => (
  <Svg w={34} h={42}>
    <path d="M2 1 H27 V38 H6 L2 34Z" fill="#e8c566" />
    {blue ? <><path d="M18 6 H29 V38 L26 41 H18Z" fill="#f2cf6e" /><rect x="22" y="9" width="6" height="31" fill="#f4f6f8" /><path d="M22 13 H28 M22 18 H28 M22 24 H28 M22 30 H28" stroke="#5da9dc" strokeWidth="2" strokeDasharray="3 1" /><path d="M29 27 L32 30 V40 H28Z" fill="#edc45a" /><path d="M7 4 L19 9 L20 37 L10 41Z" fill="#f0cf72" /></>
      : <><path d="M18 5 L32 7 V38 L22 40Z" fill="#f0f2f1" stroke="#c9cccc" strokeWidth=".6" /><path d="M11 9 L20 12 L23 40 L10 38Z" fill="#fafbfa" stroke="#bfc4c4" strokeWidth=".6" /><path d="M26 16 V32 M29 10 V24 M14 17 V33 M18 18 V34" stroke="#ccd2d2" /></>}
    <path d="M1 1 L10 6 V41 L1 36Z" fill="#f6dc8b" stroke="#dcb95c" strokeWidth=".6" />
  </Svg>
);
const TextDoc = () => <Svg w={34} h={42}><path d="M1 0 H25 L33 8 V41 H1Z" fill="#f1f1f0" stroke="#c4c4c4" /><path d="M25 0 V8 H33Z" fill="#cfcfcf" stroke="#9f9f9f" /><path d="M4 5.500 H22 M4 8.500 H22 M4 12.500 H29 M4 15.500 H29 M4 19.500 H29 M4 22.500 H29 M4 26.500 H29 M4 29.500 H29 M4 33.500 H29 M4 36.500 H29" stroke="#9b9b9b" /></Svg>;
const Bin = () => (
  <Svg w={40} h={44}>
    <path d="M3 8 L8 2 L16 4 L22 0 L30 3 L37 7 L36 14 L6 14Z" fill="#e6e8e9" /><path d="M8 3 L14 8 L22 2 L27 9 L34 5" stroke="#a9aeb2" />
    <path d="M1 6 L22 13 L39 6 L34 40 L22 43 L7 40Z" fill="#cfd4d7" fillOpacity=".92" /><path d="M22 13 L39 6 L34 40 L22 43Z" fill="#a9afb3" /><path d="M26 18 L32 24 L26 32 L33 34 M24 24 L28 28" stroke="#d4d8da" strokeWidth="2" />
    <path d="M1 6 L22 13 L39 6" stroke="#eef0f1" />
    <g stroke="#1382dc" strokeWidth="3.600"><path d="M8 21 Q12 16 17 20" /><path d="M6.500 24 L10 31" /><path d="M13 31.500 L18 31 L18 24" /></g>
  </Svg>
);
const ChromeMark = ({ w = 44 }) => (
  <Svg w={w} vb="0 0 44 44">
    <circle cx="22" cy="22" r="22" fill="#f8cd42" /><path d="M22 22 L3 11 A22 22 0 0 1 41.500 12 H22Z" fill="#d8463a" /><path d="M3 11 A22 22 0 0 0 22 44 L31.500 27 L22 22 L13 27Z" fill="#1aa05c" />
    <path d="M3 11 A22 22 0 0 1 41.500 12 H22 L13 27Z" fill="#d8463a" /><circle cx="22" cy="22" r="10" fill="#f4f4f4" /><circle cx="22" cy="22" r="8" fill="#4a84f0" />
  </Svg>
);
const ArtStack = styled.div`
  display: grid;
  > * { grid-area: 1 / 1; }
  > :last-child { align-self: end; margin: 0 0 -2px -1px; }
`;
const Shortcut = () => <Svg w={13} h={13}><rect width="13" height="13" fill="#eef1f4" /><path d="M3 12 Q2 5 7 4.500 V2 L11.500 5 L9 10 L8 8 Q5 8 5 12Z" fill="#2360a8" /></Svg>;
const Notepad = () => (
  <Svg w={46} h={42}>
    <path d="M36 4 L44 6 L43 36 L33 41Z" fill="#8b6b38" /><path d="M16 2 L40 4 L36 41 L18 36Z" fill="#e7eef0" />
    <defs><linearGradient id="np" x1="0" y1="1" x2="1" y2="0"><stop offset="0" stopColor="#1c6f7c" /><stop offset=".5" stopColor="#72bccb" /><stop offset="1" stopColor="#c9e6ec" /></linearGradient></defs>
    <path d="M16 2 L38 5 L26 38 L1 31Z" fill="url(#np)" /><path d="M16 3 L40 5" stroke="#777" strokeWidth="3" strokeDasharray="1 1" /><path d="M29 32 L36 34 M31 26 L37 28 M33 20 L38 22 M27 36 L35 39" stroke="#b5c8cc" />
  </Svg>
);

/* window icons */
const HvTitle = () => <Svg w={17} h={16}><rect x="0" y="0" width="9" height="16" fill="#5f9499" /><rect x="11" y="3" width="5" height="12" fill="#5f9499" /><path d="M2 2 H8 M2 5 H8 M2 8 H8 M12 5.500 H15 M12 8 H15" stroke="#c4e2e4" /><path d="M2 3.500 H8 M2 6.500 H8" stroke="#3c6c74" /></Svg>;
const TreeRoot = () => <Svg w={16} h={16}><rect x=".5" y="1" width="15" height="14" fill="#59cfd0" stroke="#1a8f94" /><path d="M0 4.500 H16 M8 4 V16 M1 10 H15" stroke="#126e74" strokeWidth="1.200" /><path d="M2 7.500 H6 M10 7.500 H14" stroke="#eaffff" /></Svg>;
const TreeHost = () => <Svg w={16} h={16}><rect x=".5" y=".5" width="8" height="15" fill="#4dbfc2" stroke="#14747a" /><rect x="9.500" y="4.500" width="6" height="11" fill="#59d3d4" stroke="#14747a" /><path d="M2 4.500 H7 M2 8 H7 M2 11.500 H7 M11 8 H15 M11 11.500 H15" stroke="#106469" strokeWidth="1.300" /></Svg>;
const Arrow = ({ c, s, flip }) => <Svg w={17} h={14}><path d={flip ? "M16 7 L9 .8 V4 H1 V10 H9 V13.200Z" : "M1 7 L8 .8 V4 H16 V10 H8 V13.200Z"} fill={c} stroke={s} /></Svg>;
const FolderUp = () => <Svg w={16} h={16}><path d="M1 5 H6 L8 3 H15 V15 H1Z" fill="#e9c664" stroke="#b9933a" strokeWidth=".7" /><path d="M3 10 Q8 9 8 5 H5.500 L9.500 .5 L13 5 H11 Q11 11 3 11Z" fill="#4cc22e" stroke="#278a14" strokeWidth=".5" /></Svg>;
const PaneIcon = ({ right }) => <Svg w={17} h={14}><rect x=".5" y=".5" width="16" height="13" fill="#f5f6f5" stroke="#8b8e90" /><path d="M1 2.500 H16 M1 4.500 H16" stroke="#8b8e90" /><path d={right ? "M10.500 5 V13" : "M6.500 5 V13"} stroke="#8b8e90" /><path d={right ? "M12 7 H15 M12 9 H15 M12 11 H15" : "M2 7 H5 M2 9 H5 M2 11 H5"} stroke="#3f7fc4" /><path d={right ? "M5 6 L8 9 L5 12Z" : "M11 6 L8 9 L11 12Z"} fill="#2fae27" /></Svg>;
const HelpBox = styled.div`
  width: 13px;
  height: 16px;
  background: linear-gradient(90deg, #27459c 0 2px, #4a72d8 2px, #3358bd);
  color: #fff;
  font: 700 12px/16px "Liberation Serif", serif;
  text-align: center;
  padding-left: 1px;
`;
const Help = () => <HelpBox>?</HelpBox>;

const AImport = () => <Svg w={16} h={16}><path d="M1 .5 H7 V11.500 H1Z M5 3.500 H11 L13 5.500 V15 H5Z" fill="#f5f7f6" stroke="#8b8f8e" /><path d="M8 10.500 H11 V8.500 L15.500 12 L11 15.500 V13.500 H8Z" fill="#27b52a" /></Svg>;
const ASettings = () => <Svg w={16} h={16}><path d="M2.500 .5 H11 L14 3.500 V15.500 H2.500Z" fill="#f4f6f6" stroke="#9a9e9d" /><path d="M4.500 6.500 L6 8 L8 5" stroke="#3a8fd8" strokeWidth="1.300" /><path d="M9 7 H12.500 M5 11 H7.500 M9 11 H12.500 M5 13 H7" stroke="#8fa8c0" /></Svg>;
const ASwitch = () => <Svg w={16} h={16}><path d="M4 10 V8 M12 5 V10 M6 12.500 H10" stroke="#777" /><rect x="9.500" y="1.500" width="6" height="4.500" fill="#45b1ec" stroke="#2a82bb" /><rect x=".5" y="10" width="6" height="4.500" fill="#45b1ec" stroke="#2a82bb" /><rect x="9.500" y="10" width="6" height="4.500" fill="#45b1ec" stroke="#2a82bb" /><rect x=".5" y="1.500" width="6" height="5" fill="#eef6fb" stroke="#8fb8d0" /><path d="M1.500 3.500 L3.500 5.500 L7 .8" stroke="#1b75c9" strokeWidth="1.500" /></Svg>;
const ASan = () => <Svg w={16} h={16}><rect x="5" y="0" width="8" height="12" rx="1" fill="#f2cc48" /><rect x="5" y="0" width="3" height="12" fill="#fbe690" /><rect x=".5" y="9.500" width="10" height="5.500" fill="#d7d9d8" stroke="#7c7f7e" /><path d="M3.500 11 V14 M7.500 11 V14" stroke="#222" strokeWidth="1.600" /><path d="M11 13.500 H15.500" stroke="#37b53c" strokeWidth="2.500" /></Svg>;
const AEdit = () => <Svg w={16} h={16}><path d="M2 7 H13 L14 10 H.5Z" fill="#c3c6c5" /><rect x=".5" y="10" width="14" height="4" fill="#3a3d3c" /><circle cx="12" cy="12" r="1" fill="#3bd147" /><path d="M5 13 L13 4" stroke="#f1a92a" strokeWidth="2.600" /><path d="M12.500 4.500 L14 2.800" stroke="#e58b8b" strokeWidth="2.600" /></Svg>;
const AInspect = () => <Svg w={16} h={16}><path d="M2 7 H13 L14 10 H.5Z" fill="#c3c6c5" /><rect x="0" y="10" width="14" height="4.500" fill="#3a3d3c" /><circle cx="11.500" cy="12" r="1" fill="#3bd147" /><rect x="6" y="1.500" width="9.500" height="6.500" fill="#f2f4f3" stroke="#8b8e8d" /><path d="M8 4.500 H10 M11 4.500 H14" stroke="#555" strokeWidth="1.300" /></Svg>;
const AStop = () => <Svg w={16} h={16}><circle cx="8" cy="8" r="7.400" fill="#f5f7f6" stroke="#8b8e8d" /><rect x="5" y="5" width="6" height="6" fill="#1c1e1d" /></Svg>;
const ARemove = () => <Svg w={16} h={16}><path d="M2.500 2.500 L13.500 13.500 M13.500 2.500 L2.500 13.500" stroke="#dd1322" strokeWidth="3.400" /></Svg>;
const ARefresh = () => <Svg w={16} h={16}><path d="M5 4.500 A4.700 4.700 0 1 0 11.500 5.500" stroke="#23a336" strokeWidth="3.200" /><path d="M2 1.500 H8.500 V8Z" fill="#23a336" /></Svg>;

const RightTri = () => <Svg w={6} h={10}><path d="M0 0 L5.500 5 L0 10Z" fill="#000" /></Svg>;
const Chevron = () => <Svg w={6} h={8}><path d="M1 .5 L4.500 4 L1 7.500" stroke="#3c3c3c" strokeWidth="1.300" /></Svg>;
const ScrollArrow = ({ left }) => <Svg w={5} h={8}><path d={left ? "M4.500 .5 L1 4 L4.500 7.500" : "M.5 .5 L4 4 L.5 7.500"} stroke="#454847" strokeWidth="1.700" /></Svg>;

/* taskbar icons */
const Start = () => <Svg w={16} h={16}><path d="M0 2.500 L6.500 1.500 V7.500 H0Z M7.500 1.300 L16 0 V7.500 H7.500Z M0 8.500 H6.500 V14.500 L0 13.500Z M7.500 8.500 H16 V16 L7.500 14.700Z" fill="#f8fdf9" /></Svg>;
const Find = () => <Svg w={18} h={18}><circle cx="11" cy="6.500" r="5" stroke="#eee" strokeWidth="1.400" /><path d="M7.500 10 L1 17" stroke="#eee" strokeWidth="1.500" /></Svg>;
const TaskView = () => <Svg w={17} h={17} stroke="#eee" strokeWidth="1.200"><path d="M1.500 1 V3.500 H11 V1 M1.500 16 V13.500 H11 V16 M14.500 1 V5 M14.500 10 V16" /><rect x="1.600" y="6" width="9.500" height="5" /><rect x="13.500" y="6.500" width="2.500" height="2.500" fill="#eee" stroke="none" /></Svg>;
const IE = () => <Svg w={24} h={24}><path d="M21 14.500 H8 Q9 18.500 13 18.500 Q16 18.500 17 16.500 H21 Q19 22 12.500 22 Q4 21 4 13 Q4.500 5 12.500 4.500 Q21.500 5 21 14.500Z M8 11.500 H17 Q16 7.800 12.500 7.800 Q9 7.800 8 11.500Z" fill="#4cc2f1" fillRule="evenodd" /><path d="M22 7 Q24 1 19 1.500 Q11 3 4 13 Q-1 21 3 22.500 Q5 23 9 20.500" stroke="#f4c22c" strokeWidth="1.800" /></Svg>;
const Explorer = () => <Svg w={22} h={19}><path d="M0 2 Q0 0 2 0 H7 L9 2 H20 Q21.500 2 21.500 4 V18 H0Z" fill="#f8df8b" /><path d="M0 4 H9 L11 2.500 H21.500" stroke="#e8bd4b" /><path d="M4 19 V12 Q4 10 6 10 H16 Q18 10 18 12 V19 H14 V14.500 H8 V19Z" fill="#36aee2" /></Svg>;
const Ssdt = () => <Svg w={24} h={24}><path d="M16 2 H22 V8 M2 16 V22 H8" stroke="#46a146" strokeWidth="2" /><path d="M4 3 Q10 0 15 3 V15 Q10 18 4 15Z" fill="#f3b62b" /><ellipse cx="9.500" cy="3.500" rx="5.500" ry="2" fill="#ffe48a" /><path d="M11 13 L21 22 M20 12 L11 21 M18 15 L22 12 M12 12 L14 15" stroke="#1d7fd0" strokeWidth="2" /></Svg>;
const ServerMgr = () => <Svg w={24} h={26}><rect x="1" y="1" width="19" height="15" fill="#f0f0f0" stroke="#9a9a9a" /><rect x="1" y="1" width="19" height="3" fill="#b5b8ba" /><path d="M4 7 H9 M4 10 H9 M12 7 H18" stroke="#999" /><path d="M8 14 Q8 11 12 11 Q16 11 16 14" stroke="#7a1010" strokeWidth="1.600" /><path d="M1 14 L18 13 L22 16 V22 L17 25 L3 23Z" fill="#cf2f2f" /><path d="M2 18 L17 19 L22 17" stroke="#8a1414" /></Svg>;
const HvTask = () => <Svg w={24} h={24}><path d="M2 4 L10 1 L17 4 V22 L9 23 L2 21Z" fill="#27c3d3" /><path d="M10 5 L17 4 V22 L9 23Z" fill="#109fb0" /><path d="M12 12 L19 9 L23 12 V21 L17 23 L12 22Z" fill="#3cd7e4" /><path d="M17 13 L23 12 V21 L17 23Z" fill="#16aabb" /><path d="M3 8 L9 10 M3 11 L9 13 M3 14 L9 16 M3 17 L9 19 M13 15 L16 16 M13 18 L16 19" stroke="#e2ffff" strokeWidth="1.200" /></Svg>;
const Net = () => <Svg w={17} h={14} stroke="#eee"><path d="M5 1.500 H16 V9.500 H4.500 V6 M10 10 V12.500 M6.500 13 H13.500" /><path d="M1 1.500 H4.500 V5 H1Z M2.500 5 V10" /></Svg>;
const Muted = () => <Svg w={17} h={15}><path d="M1 5.500 H3 L6 2 V12 L3 9 H1Z" stroke="#eee" /><circle cx="12" cy="10" r="4.600" fill="#d6222b" /><path d="M10 8 L14 12 M14 8 L10 12" stroke="#fff" strokeWidth="1.200" /></Svg>;
const Notice = () => <Svg w={17} h={17}><path d="M.7 1 H16 V13 H11 L8.500 15.500 L6 13 H.7Z" stroke="#f0f0f0" strokeWidth="1.200" /></Svg>;
const Cursor = () => <Svg w={14} h={21}><path d="M.7 1 V16.500 L4.300 13 L7 19 L9.500 18 L7 12 H12Z" fill="#fff" stroke="#111" /></Svg>;

/* ---------- data ---------- */

const dockApps = [
  { icon: <Firefox />, dots: 1 }, { icon: <Thunderbird /> }, { icon: <Software /> }, { icon: <Files />, dots: 1 },
  { icon: <IdeBox><Rider /><IdeText $m="9px 0 0 9px" $w={30}>RD</IdeText></IdeBox> },
  { icon: <IdeBox><DataGrip /><IdeText $m="10px 0 0 10px" $w={28}>DG</IdeText></IdeBox> },
  { icon: <VsCode /> }, { icon: <Vim /> },
  { icon: <LogoCard $size={15.5} $c="#444c52" $pb={3}><Whale /><T w={47}>docker</T></LogoCard> },
  { icon: <RemminaMark />, dots: 2, active: true },
  { icon: <AwsCard><AwsTop>aws</AwsTop><AwsCube /></AwsCard> },
  { icon: <LogoCard $size={15} $c="#1a7bc8" $pb={4}><AzureMark /><T w={38}>Azure</T></LogoCard> },
  { icon: <Gimp /> }, { icon: <Kazam /> }, { icon: <Zoom /> },
];

const tools = [
  { h: 35, el: <TFull /> }, { h: 37, el: <TFit /> }, { h: 28, el: <Caret w={9} h={5} c="#8f8e8b" /> }, { h: 36, el: <TWin /> },
  { h: 1, line: true }, { h: 34, el: <TScale />, active: true }, { h: 36, el: <TFind /> }, { h: 30, el: <Caret w={9} h={5} c="#8f8e8b" /> },
  { h: 35, el: <TKeys /> }, { h: 36, el: <TTool /> }, { h: 36, el: <TGears /> }, { h: 37, el: <TCam />, line: true }, { h: 37, el: <TDown /> }, { h: 35, el: <TPlug /> },
];

const actions = [
  ["Yeni", 21, null, false, true], ["Sanal Makineyi Al...", 102, <AImport />], ["Hyper-V Ayarları...", 96, <ASettings />, true],
  ["Sanal Anahtar Yöneticisi...", 135, <ASwitch />], ["Sanal SAN Yöneticisi...", 116, <ASan />], ["Diski Düzenle...", 79, <AEdit />, true],
  ["Diski İncele...", 68, <AInspect />], ["Hizmeti Durdur", 81, <AStop />, true], ["Sunucuyu Kaldır", 87, <ARemove />], ["Yenile", 31, <ARefresh />],
  ["Görünüm", 51, null, true, true], ["Yardım", 37, <Help />, true],
];

const menu = [
  ["Yeni", 22, { sub: true }], ["Sanal Makineyi Al...", 102, { hot: true }], null,
  ["Hyper-V Ayarları...", 96, {}], ["Sanal Anahtar Yöneticisi...", 135, {}], ["Sanal SAN Yöneticisi...", 116, {}], null,
  ["Diski Düzenle...", 79, {}], ["Diski İncele...", 68, {}], null,
  ["Hizmeti Durdur", 81, {}], ["Sunucuyu Kaldır", 87, {}], ["Yenile", 31, {}], null,
  ["Görünüm", 51, { sub: true }], null, ["Yardım", 37, {}],
];

/* ---------- composition ---------- */

function HyperV() {
  return (
    <Win>
      <WinTitle>
        <HvTitle /><T w={97}>Hyper-V Yöneticisi</T>
        <WinButtons>
          <Svg w={11} h={11}><path d="M.5 5.500 H10.500" stroke="#000" /></Svg>
          <Svg w={11} h={11}><rect x=".5" y=".5" width="10" height="10" stroke="#000" /></Svg>
          <Svg w={11} h={11}><path d="M.5 .5 L10.500 10.500 M10.500 .5 L.5 10.500" stroke="#000" strokeWidth="1.200" /></Svg>
        </WinButtons>
      </WinTitle>
      <MenuBar><T w={32}>Dosya</T><T w={32}>Eylem</T><T w={51}>Görünüm</T><T w={37}>Yardım</T></MenuBar>
      <ToolBar>
        <Nav><Arrow c="#39a5ea" s="#1c6fb5" /><Arrow c="#8a8c8b" s="#636564" flip /></Nav>
        <ToolSep $l={5} $r={9} />
        <FolderUp /><Pressed $l={3}><PaneIcon /></Pressed><ToolSep $l={2} $r={9} />
        <Help /><Pressed $l={6}><PaneIcon right /></Pressed>
      </ToolBar>
      <Panels>
        <Tree>
          <TreeRow $l={4} $gap={5}><TreeRoot /><T w={97}>Hyper-V Yöneticisi</T></TreeRow>
          <TreeRow $l={21} $gap={5} $sel><TreeHost /><T w={68}>VM-BACKUP</T></TreeRow>
        </Tree>
        <Sunken $w={405} $mr={5}>
          <Group $mt={8} $h={188}>
            <GroupHead><T w={88} bold>Sanal Makineler</T></GroupHead>
            <Columns>
              <Column><T w={37}>Durum</T></Column><Column><T w={71}>CPU Kullanı...</T></Column><Column><T w={54}>Atanan Be</T></Column>
            </Columns>
            <Message $t={11} $l={172}><T w={202}>Bu sunucuda bir sanal makine bulunamadı.</T></Message>
            <Scroll $pl={16} $mb={1}><Thumb $w={336} /></Scroll>
          </Group>
          <Group $mt={4} $h={185}>
            <GroupHead><T w={103} bold>Denetim Noktaları</T></GroupHead>
            <Message $t={14} $l={210}><T w={126}>Bir sanal makine seçilmedi.</T></Message>
          </Group>
          <Group $mt={6} $h={194}>
            <GroupHead><T w={51} bold>Ayrıntılar</T></GroupHead>
            <Message $t={11} $l={232}><T w={83}>Bir öğe seçilmedi.</T></Message>
          </Group>
          <Scroll $pl={5}><ScrollArrow left /><Thumb $w={263} $l={6} /><ScrollArrow /></Scroll>
        </Sunken>
        <Sunken $w={333}>
          <ActHead><T w={48} bold>Eylemler</T></ActHead>
          <ActGroup><T w={69}>VM-BACKUP</T><Svg w={9} h={5}><path d="M0 5 L4.500 0 L9 5Z" fill="#000" /></Svg></ActGroup>
          {actions.map(([text, w, icon, line, sub]) => (
            <ActRow key={text} $line={line}><ActIcon>{icon}</ActIcon><T w={w}>{text}</T>{sub && <RightTri />}</ActRow>
          ))}
        </Sunken>
      </Panels>
      <Status>
        <StatusText><T w={70}>VM-BACKUP:</T><T w={118}>0 sanal makine seçildi.</T></StatusText>
        <StatusCell $w={133} /><StatusCell $w={86} />
      </Status>
    </Win>
  );
}

export default function App() {
  return (
    <Screen>
      <Global />
      <TopBar>
        <TopLeft>
          <T w={68} bold>Activities</T>
          <AppName><RemminaMark w={16} /><T w={66} bold>Remmina</T><Caret /></AppName>
        </TopLeft>
        <T w={64} bold>Cts 19:47</T>
        <TopRight>
          <Tray $w={46}><Zoom w={21} /></Tray><Tray $w={46}><RemminaMark w={19} flat /></Tray><Tray $w={47}><Cam /></Tray>
          <Tray $w={47}><Wifi /></Tray><Tray $w={10}><Bt /></Tray><Tray $w={46}><Vol /></Tray><Tray $w={12}><Batt /></Tray>
          <Tray $w={35}><Caret /></Tray>
        </TopRight>
      </TopBar>
      <Body>
        <Dock>
          {dockApps.map((a, i) => (
            <DockCell key={i}><Dots>{Array.from({ length: a.dots || 0 }, (_, k) => <Dot key={k} />)}</Dots><Tile $active={a.active}>{a.icon}</Tile></DockCell>
          ))}
          <DockCell $h={29}><Dots /><Tile><Spotify /></Tile></DockCell>
          <DockCell $h={64}><Dots /><Tile><AppGrid /></Tile></DockCell>
        </Dock>
        <Remmina>
          <TitleBar><i /><T w={90} bold>VM-BACKUP</T>
            <Buttons>
              <RoundButton><Svg w={8} h={8}><path d="M0 4.500 H8" stroke="#3b3a36" strokeWidth="1.200" /></Svg></RoundButton>
              <RoundButton><Svg w={8} h={8}><rect x=".6" y="1.600" width="6.800" height="5" stroke="#3b3a36" strokeWidth="1.200" /></Svg></RoundButton>
              <RoundButton $close><Svg w={8} h={8}><path d="M1.500 1.500 L6.500 6.500 M6.500 1.500 L1.500 6.500" stroke="#4a2010" strokeWidth="1.500" /></Svg></RoundButton>
            </Buttons>
          </TitleBar>
          <RemBody>
            <ToolColumn>
              {tools.map((t, i) => <ToolSlot key={i} $h={t.h} $line={t.line} $active={t.active}>{t.el}</ToolSlot>)}
            </ToolColumn>
            <Pane>
              <TabStrip><Tab><TabMark /><T w={84}>VM-BACKUP</T><TabClose /></Tab></TabStrip>
              <Viewport>
                <DesktopIcons>
                  <DeskIcon><DeskArt><FolderDocs /></DeskArt><T w={66}>AWS-Appli...</T></DeskIcon>
                  <DeskIcon><DeskArt><FolderDocs blue /></DeskArt><T w={65}>sql-server-...</T></DeskIcon>
                  <DeskIcon><DeskArt><TextDoc /></DeskArt><T w={68}>sql job query</T></DeskIcon>
                  <DeskIcon><DeskArt><Bin /></DeskArt><T w={21}>Geri</T><T w={50}>Dönüşü...</T></DeskIcon>
                  <i /><i />
                  <DeskIcon><DeskArt><ArtStack><ChromeMark /><Shortcut /></ArtStack></DeskArt><T w={38}>Google</T><T w={43}>Chrome</T></DeskIcon>
                  <i /><i />
                  <DeskIcon><DeskArt><Notepad /></DeskArt><T w={56}>credentials</T></DeskIcon>
                </DesktopIcons>
                <Taskbar>
                  <TaskGroup><TaskButton><Start /></TaskButton><TaskButton><Find /></TaskButton><TaskButton><TaskView /></TaskButton></TaskGroup>
                  <TaskGroup $gap={1}>
                    <TaskButton><IE /></TaskButton><TaskButton><Explorer /></TaskButton><TaskButton><ChromeMark w={22} /></TaskButton>
                    <TaskButton><Ssdt /></TaskButton><TaskButton><ServerMgr /></TaskButton><TaskButton $active><HvTask /></TaskButton>
                  </TaskGroup>
                  <SysTray>
                    <Tray $w={24}><Net /></Tray><Tray $w={24}><Muted /></Tray><Tray $w={40}><T w={22}>TUR</T></Tray>
                    <Clock><T w={27}>19:47</T><T w={48}>3.08.2019</T></Clock>
                    <Notice /><PeekLine />
                  </SysTray>
                </Taskbar>
                <HyperV />
                <ContextMenu>
                  {menu.map((m, i) => m
                    ? <MenuItem key={i} $hot={m[2].hot}><T w={m[1]}>{m[0]}</T>{m[2].sub && <Chevron />}</MenuItem>
                    : <MenuLine key={i} />)}
                </ContextMenu>
                <Pointer><Cursor /></Pointer>
                <Glitch />
              </Viewport>
            </Pane>
          </RemBody>
        </Remmina>
      </Body>
    </Screen>
  );
}
